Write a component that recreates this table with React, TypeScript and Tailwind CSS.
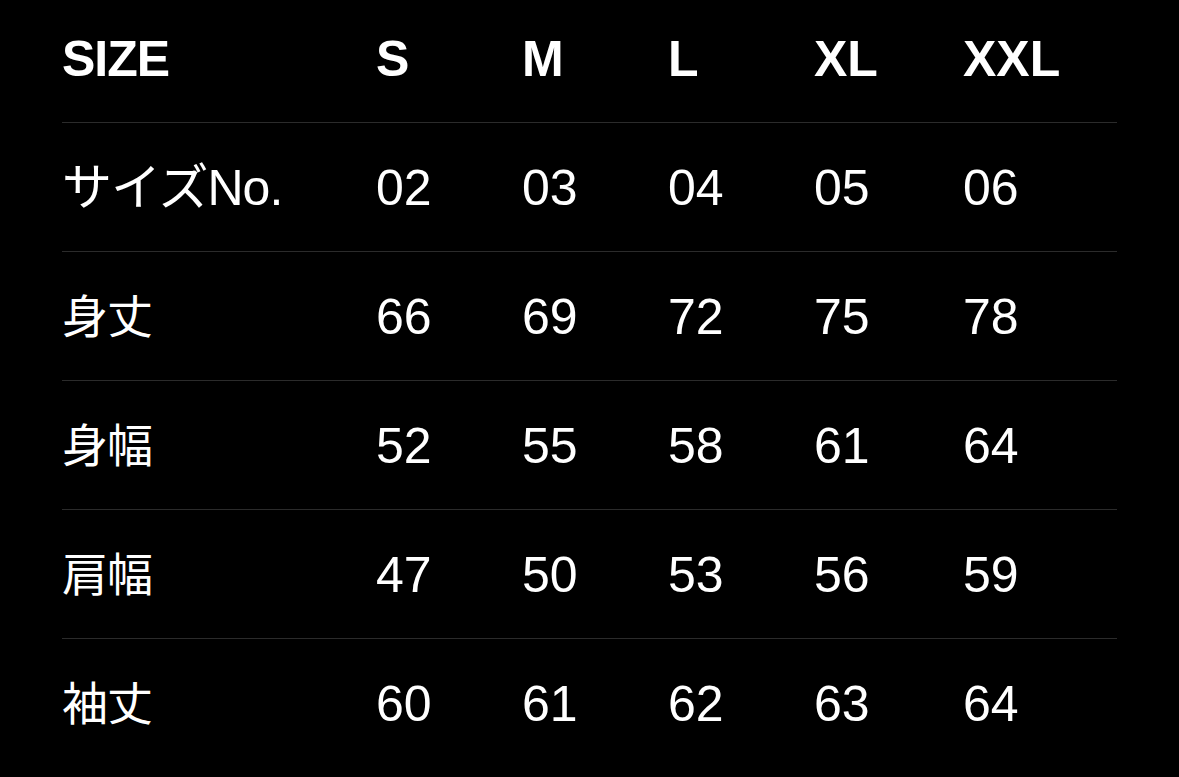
const sizes = ["S", "M", "L", "XL", "XXL"];

const rows: { label: string; values: string[]; kanji?: boolean }[] = [
  { label: "サイズNo.", values: ["02", "03", "04", "05", "06"] },
  { label: "身丈", values: ["66", "69", "72", "75", "78"], kanji: true },
  { label: "身幅", values: ["52", "55", "58", "61", "64"], kanji: true },
  { label: "肩幅", values: ["47", "50", "53", "56", "59"], kanji: true },
  { label: "袖丈", values: ["60", "61", "62", "63", "64"], kanji: true },
];

const cols = "grid grid-cols-[314px_146px_146px_146px_149px_1fr]";

export default function App() {
  return (
    <div
      className="min-h-[777px] w-full bg-black px-[62px] text-white"
      style={{ fontFamily: '"Liberation Sans", "Noto Sans CJK JP", sans-serif' }}
    >
      {/* header */}
      <div className={`${cols} pt-[34px] pb-[38px] text-[50px] leading-[50px] font-bold`}>
        <div className="tracking-[-1px]">SIZE</div>
        {sizes.map((s) => (
          <div key={s}>{s}</div>
        ))}
        <div />
      </div>

      {rows.map((row) => (
        <div
          key={row.label}
          className={`${cols} border-t-[1.5px] border-[#2b2b2b] pt-[40px] pb-[38px] text-[50px] leading-[50px]`}
        >
          <div className={row.kanji ? "text-[46px] tracking-[-1px]" : "tracking-[-1px]"}>
            {row.label}
          </div>
          {row.values.map((v, i) => (
            <div key={i}>{v}</div>
          ))}
          <div />
        </div>
      ))}
    </div>
  );
}
